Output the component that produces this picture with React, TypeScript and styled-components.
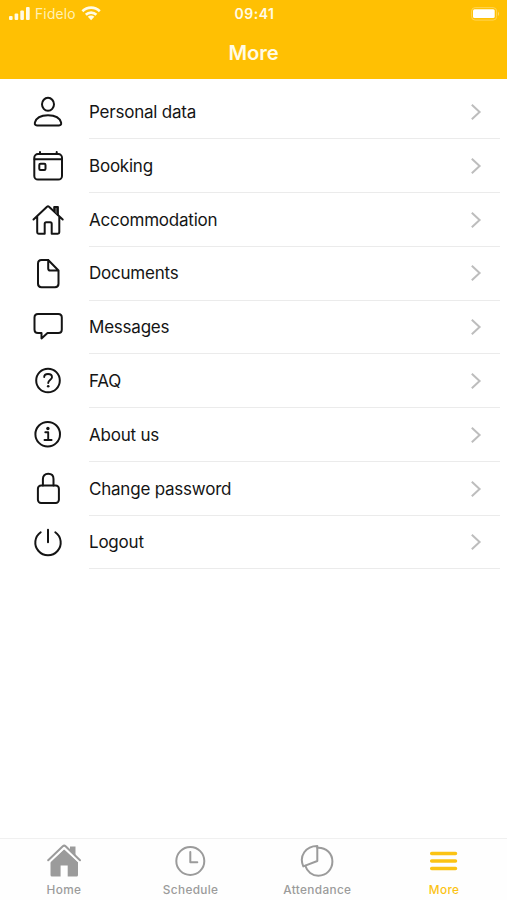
import React from "react";
import styled, { createGlobalStyle } from "styled-components";

const GlobalStyle = createGlobalStyle`
  * { box-sizing: border-box; }
  body { margin: 0; background: #fff; }
`;

const Screen = styled.div`
  width: 507px;
  height: 900px;
  display: flex;
  flex-direction: column;
  overflow: hidden;
  background: #fff;
  color: #151515;
  font-family: Inter, "Liberation Sans", sans-serif;
`;

const Header = styled.header`
  height: 79px;
  flex: none;
  background: #ffc003;
  color: #fffbe6;
`;

const StatusBar = styled.div`
  height: 27px;
  display: grid;
  grid-template-columns: 1fr auto 1fr;
  align-items: center;
  padding: 0 7px 0 9px;
`;

const Carrier = styled.div`
  display: flex;
  align-items: center;
  gap: 5px;
  font-size: 13.8px;
  letter-spacing: 0.2px;
  line-height: 27px;
  color: #fff0b5;
  svg { flex: none; }
`;

const Clock = styled.div`
  font-size: 14px;
  font-weight: 600;
  letter-spacing: 0.5px;
  line-height: 28px;
`;

const Battery = styled.div`
  display: flex;
  justify-content: flex-end;
`;

const Title = styled.h1`
  margin: 0;
  font-size: 20.2px;
  font-weight: 600;
  letter-spacing: -0.1px;
  line-height: 52px;
  text-align: center;
`;

const Menu = styled.main`
  flex: 1;
  padding: 6.5px 7px 0 30px;
`;

const Row = styled.div`
  height: 53.78px;
  display: flex;
  align-items: center;
`;

const RowIcon = styled.svg`
  width: 36px;
  height: 36px;
  flex: none;
  margin-right: 23px;
  fill: none;
  stroke: #141414;
  stroke-width: 2;
  stroke-linecap: round;
  stroke-linejoin: round;
`;

const RowBody = styled.div`
  flex: 1;
  height: 100%;
  display: flex;
  align-items: center;
  justify-content: space-between;
  border-bottom: 1.5px solid #ebebeb;
  padding: 0.6px 18px 0 0;
`;

const Label = styled.span`
  font-size: 17px;
  letter-spacing: -0.22px;
  white-space: nowrap;
`;

const TabBar = styled.nav`
  height: 62px;
  flex: none;
  display: grid;
  grid-template-columns: repeat(4, 1fr);
  border-top: 1.5px solid #f0f0f0;
  background: #fefefe;
`;

const Tab = styled.div<{ $active?: boolean }>`
  display: flex;
  flex-direction: column;
  align-items: center;
  padding-top: 4px;
  color: ${(p) => (p.$active ? "#fbc314" : "#9b9b9b")};
`;

const TabIcon = styled.svg`
  width: 36px;
  height: 36px;
  fill: none;
  stroke: currentColor;
  stroke-width: 2;
  stroke-linecap: round;
  stroke-linejoin: round;
`;

const TabLabel = styled.span`
  margin-top: 4px;
  padding-left: 1px;
  font-size: 11.8px;
  font-weight: 500;
  line-height: 15px;
  letter-spacing: 0.35px;
`;

const rows: { label: string; icon: React.ReactNode }[] = [
  {
    label: "Personal data",
    icon: (
      <>
        <ellipse cx="18" cy="10.3" rx="6" ry="6.5" />
        <path d="M7 31.4H29Q31.6 31.4 31.1 28.6C29.8 23.8 24.4 21.3 18 21.3S6.2 23.8 4.9 28.6Q4.4 31.4 7 31.4Z" />
      </>
    ),
  },
  {
    label: "Booking",
    icon: (
      <>
        <rect x="4.3" y="6" width="27.7" height="25.6" rx="3.7" />
        <path d="M4.5 11.3H31.8M10 3.9V6M26.7 3.9V6" />
        <rect x="9.3" y="15.7" width="6.2" height="6.2" rx="1.2" />
      </>
    ),
  },
  {
    label: "Accommodation",
    icon: (
      <>
        <path d="M3.5 17.5L17 4.7Q18 3.8 19 4.7L32.7 17.5M7.2 14.4V30.3Q7.2 31.7 8.6 31.7H14.7V21.8Q14.7 20.3 16.2 20.3H20.2Q21.7 20.3 21.7 21.8V31.7H27.8Q29.3 31.7 29.3 30.3V14.4" />
        <path fill="#555" d="M24.2 9.3V5H27.9V13" />
      </>
    ),
  },
  {
    label: "Documents",
    icon: (
      <path d="M18.2 4H11.5Q8 4 8 7.5V27.8Q8 31.2 11.5 31.2H25Q28.5 31.2 28.5 27.8V14.5L18.2 4V12.4Q18.2 14.5 20.3 14.5H28.5" />
    ),
  },
  {
    label: "Messages",
    icon: (
      <path d="M8 5H28.3Q31.8 5 31.8 8.5V20.5Q31.8 24 28.3 24H17.5L11.5 29.4V24H8Q4.5 24 4.5 20.5V8.5Q4.5 5 8 5Z" />
    ),
  },
  {
    label: "FAQ",
    icon: (
      <>
        <circle cx="18" cy="17.5" r="11.8" />
        <path strokeWidth="1.9" d="M14.2 14C14.2 11.9 15.8 11 18 11S22 12.2 22 14.2C22 16.7 18.2 16.7 18.2 20.1" />
        <circle cx="18.2" cy="23.3" r="1.3" fill="#141414" stroke="none" />
      </>
    ),
  },
  {
    label: "About us",
    icon: (
      <>
        <circle cx="17.7" cy="17.2" r="12.3" />
        <path strokeWidth="1.9" d="M15.3 15.2H18.2V22.7M14.5 23H21.6" />
        <circle cx="17.9" cy="11.5" r="1.7" fill="#141414" stroke="none" />
      </>
    ),
  },
  {
    label: "Change password",
    icon: (
      <>
        <rect x="7.9" y="14.5" width="21" height="17.4" rx="3.2" />
        <path d="M12.9 14.5V8C12.9 4.8 14.8 2.8 18.2 2.8S23.5 4.8 23.5 8V14.5" />
      </>
    ),
  },
  {
    label: "Logout",
    icon: <path d="M10.7 7.2A12.7 12.7 0 1 0 25.3 7.2M18 4.8V17.3" />,
  },
];

const tabs: { label: string; active?: boolean; icon: React.ReactNode }[] = [
  {
    label: "Home",
    icon: (
      <g transform="translate(1 0)">
        <path fill="currentColor" stroke="none" d="M18 6L32 18.8V32Q32 33.5 30.5 33.5H21.7V22.5H14.6V33.5H6Q4.5 33.5 4.5 32V18.8Z" />
        <path fill="currentColor" stroke="none" d="M24 3.5H29.5V15L24 9.8Z" />
        <path stroke="#fefefe" strokeWidth="3.6" d="M3 18.2L17 5Q18.2 3.8 19.4 5L33.5 18.2" />
        <path d="M2.2 17.3L16.8 3.3Q18.2 2 19.6 3.3L34 17.3" />
      </g>
    ),
  },
  {
    label: "Schedule",
    icon: (
      <>
        <circle cx="18.3" cy="18" r="14" />
        <path d="M18.3 9V19.3H25.3" />
      </>
    ),
  },
  {
    label: "Attendance",
    icon: (
      <>
        <path d="M18.3 2.9V18L4.3 23.4C-.3 13 6.8 2.9 18.3 2.9Z" />
        <path d="M18.3 4.8C27.4 4.3 33.4 10.8 33.4 18.6C33.4 26.6 27.2 32.7 19.4 32.7C13.2 32.7 8 28.6 6.3 22.8" />
      </>
    ),
  },
  {
    label: "More",
    active: true,
    icon: <path strokeWidth="3.5" d="M5.7 10.5H29.5M5.7 18.1H29.5M5.7 25.5H29.5" />,
  },
];

export default function App() {
  return (
    <Screen>
      <GlobalStyle />
      <Header>
        <StatusBar>
          <Carrier>
            <svg width="21" height="14" viewBox="0 0 21 14" fill="#fffbe6">
              <rect x="0" y="9" width="3.6" height="4" rx="1" />
              <rect x="5.6" y="6.5" width="3.6" height="6.5" rx="1" />
              <rect x="11.3" y="3.5" width="3.6" height="9.5" rx="1" />
              <rect x="17" y="0" width="3.7" height="13" rx="1" />
            </svg>
            <span>Fidelo</span>
            <svg width="20" height="16" viewBox="0 0 20 16" fill="none" stroke="#fffbe6" strokeWidth="2.6">
              <path d="M1.4 5.2C6.4.4 13.8.4 18.8 5.2M4.8 8.8C7.8 5.9 12.4 5.9 15.4 8.8" />
              <path fill="#fffbe6" stroke="none" d="M6.8 10.8C8.6 9.2 11.6 9.2 13.4 10.8L10.1 14.2Z" />
            </svg>
          </Carrier>
          <Clock>09:41</Clock>
          <Battery>
            <svg width="29" height="14" viewBox="0 0 29 14">
              <rect x=".6" y=".6" width="25" height="12.5" rx="3.5" fill="none" stroke="#ffd453" />
              <rect x="2" y="2.3" width="21.7" height="8.8" rx="1.5" fill="#fff" />
              <path d="M27 4.5Q29 6.8 27 9Z" fill="#ffda70" />
            </svg>
          </Battery>
        </StatusBar>
        <Title>More</Title>
      </Header>
      <Menu>
        {rows.map((row) => (
          <Row key={row.label}>
            <RowIcon viewBox="0 0 36 36">{row.icon}</RowIcon>
            <RowBody>
              <Label>{row.label}</Label>
              <svg width="12" height="18" viewBox="0 0 12 18" fill="none" stroke="#bdbdbd" strokeWidth="2">
                <path d="M1.8 1.8L9.6 9L1.8 16.2" />
              </svg>
            </RowBody>
          </Row>
        ))}
      </Menu>
      <TabBar>
        {tabs.map((tab) => (
          <Tab key={tab.label} $active={tab.active}>
            <TabIcon viewBox="0 0 36 36">{tab.icon}</TabIcon>
            <TabLabel>{tab.label}</TabLabel>
          </Tab>
        ))}
      </TabBar>
    </Screen>
  );
}
